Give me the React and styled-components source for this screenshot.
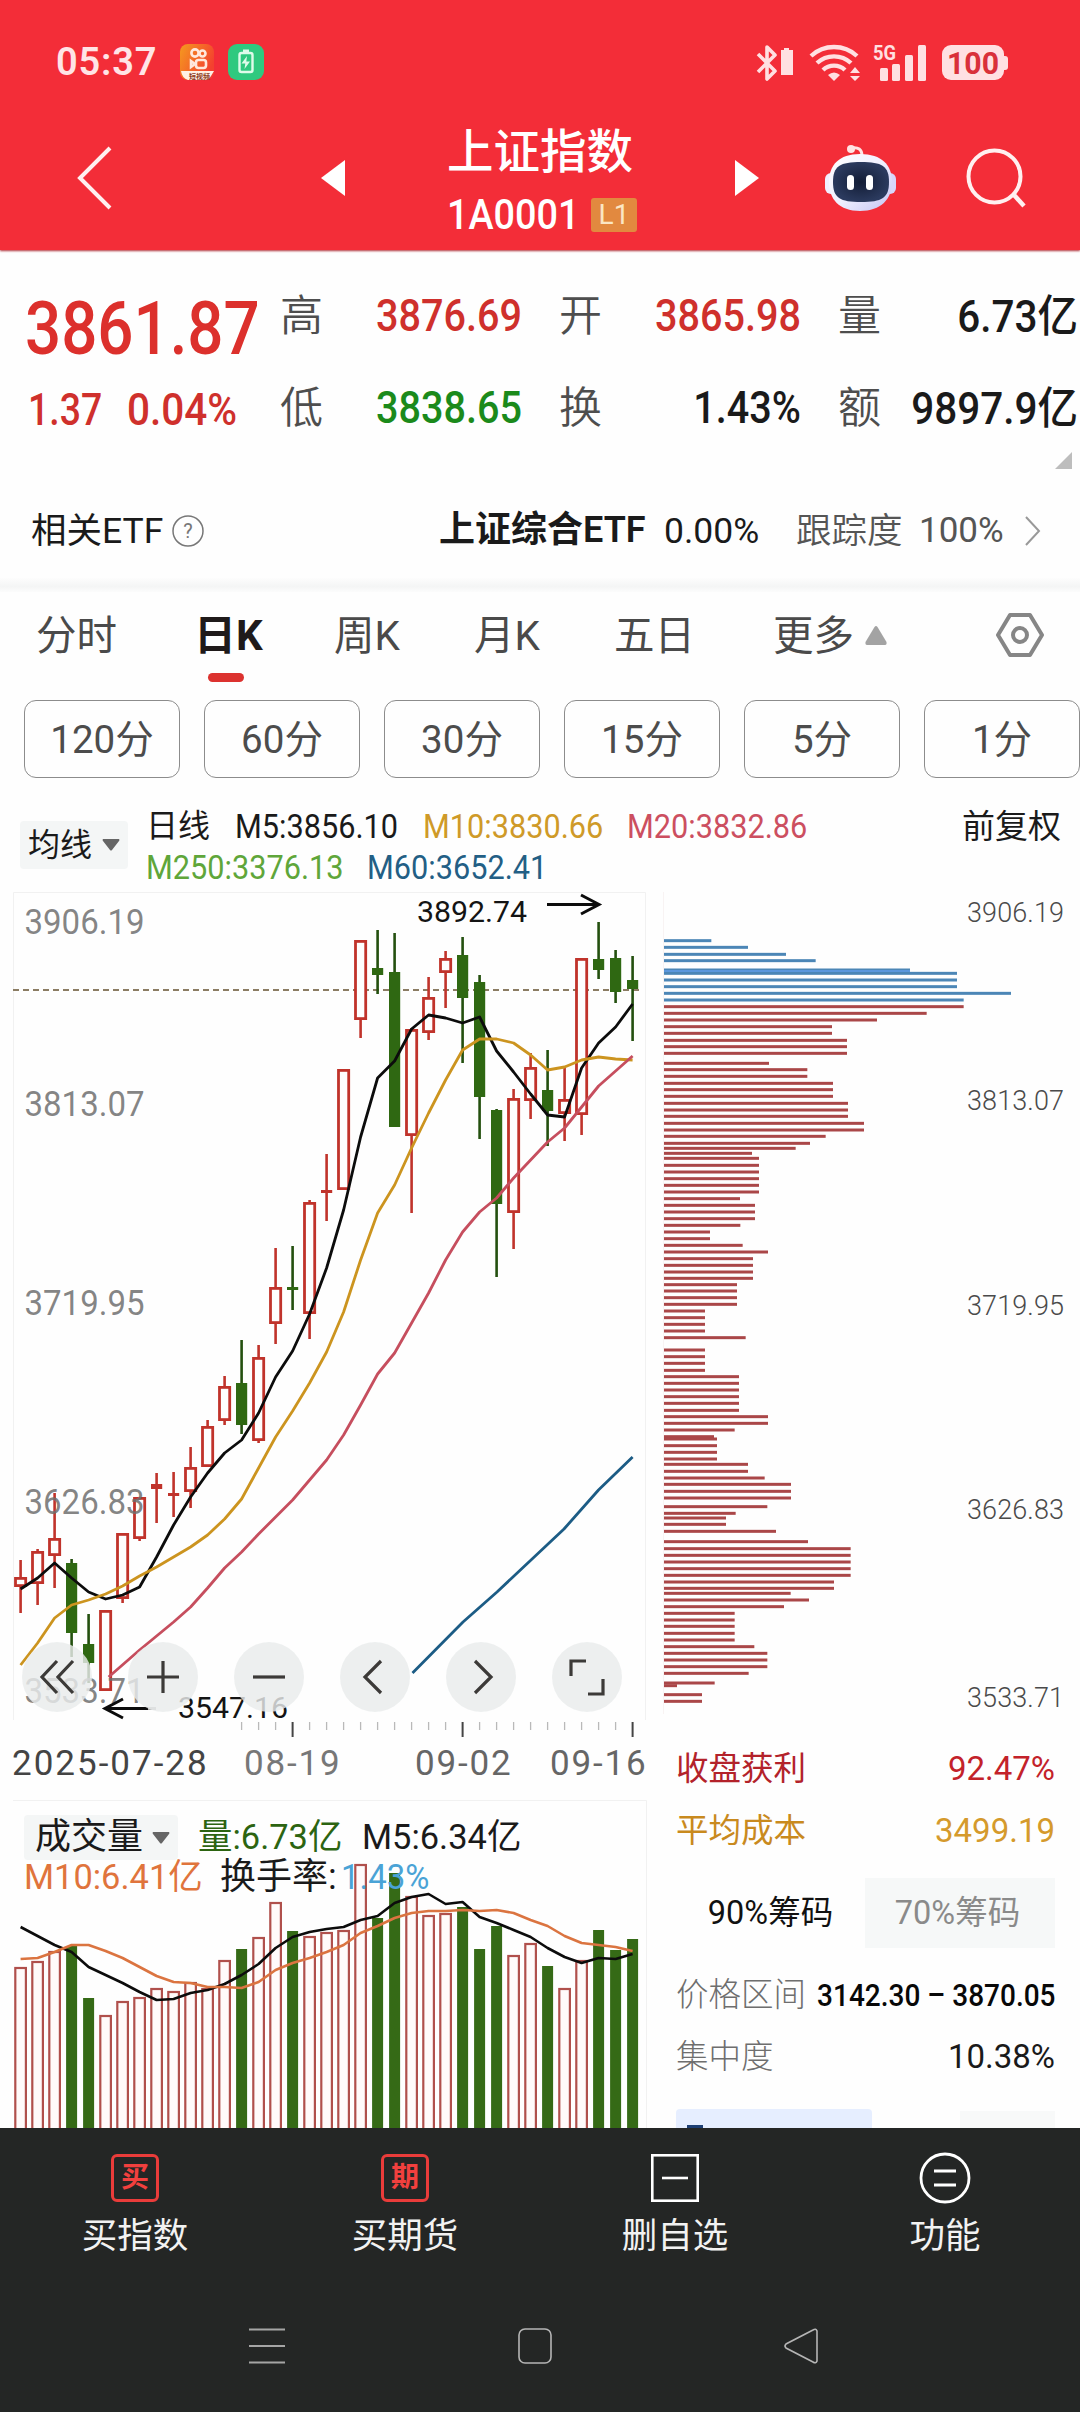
import React from "react";
import styled, { createGlobalStyle } from "styled-components";

const FONT = `Roboto, "Noto Sans CJK SC", sans-serif`;

const GlobalStyle = createGlobalStyle`
  * { box-sizing: border-box; }
  body { margin: 0; background: #fff; font-family: ${FONT}; }
`;

/* ---------- data ---------- */

const STEP = 17;
const xAt = (i) => 20.6 + i * STEP;

// [direction, high, body top, body bottom, low]
const CANDLES = [
  ["r", 1560, 1577, 1587, 1613], ["r", 1549, 1551, 1584, 1605], ["r", 1493, 1538, 1556, 1588],
  ["g", 1559, 1563, 1633, 1657], ["g", 1614, 1644, 1663, 1683], ["r", 1610, 1610, 1691, 1691],
  ["r", 1533, 1533, 1599, 1603], ["r", 1497, 1497, 1539, 1541], ["r", 1473, 1484, 1489, 1523],
  ["r", 1472, 1493, 1496, 1517], ["r", 1447, 1467, 1492, 1508], ["r", 1420, 1426, 1467, 1467],
  ["r", 1376, 1386, 1421, 1425], ["g", 1340, 1383, 1425, 1434], ["r", 1345, 1357, 1441, 1443],
  ["r", 1248, 1287, 1324, 1344], ["g", 1246, 1287, 1290, 1310], ["r", 1200, 1202, 1314, 1339],
  ["r", 1154, 1190, 1193, 1221], ["r", 1069, 1069, 1190, 1190], ["r", 940, 940, 1020, 1038],
  ["g", 930, 968, 975, 994], ["g", 933, 972, 1127, 1127], ["r", 1028, 1029, 1136, 1213],
  ["r", 977, 997, 1033, 1040], ["r", 951, 958, 973, 1008], ["g", 937, 955, 998, 1063],
  ["g", 975, 982, 1097, 1139], ["g", 1109, 1110, 1204, 1277], ["r", 1089, 1098, 1213, 1249],
  ["r", 1053, 1067, 1101, 1119], ["g", 1050, 1090, 1111, 1146], ["r", 1067, 1099, 1114, 1141],
  ["r", 958, 958, 1115, 1135], ["g", 922, 959, 970, 979], ["g", 950, 958, 992, 1003],
  ["g", 956, 980, 989, 1041],
];

const MA5 = [1589, 1578, 1563, 1578, 1592, 1599, 1595, 1587, 1557, 1525, 1497, 1473, 1453, 1440, 1413, 1377, 1351, 1314, 1268, 1210, 1137, 1078, 1061, 1029, 1015, 1018, 1023, 1017, 1051, 1072, 1094, 1115, 1117, 1068, 1043, 1027, 1004];
const MA10 = [1665, 1643, 1618, 1605, 1600, 1594, 1586, 1576, 1567, 1557, 1547, 1535, 1519, 1499, 1468, 1437, 1411, 1383, 1352, 1312, 1260, 1213, 1185, 1148, 1113, 1080, 1050, 1039, 1039, 1043, 1055, 1070, 1067, 1060, 1057, 1059, 1060];
const MA20 = [1650, 1636, 1622, 1607, 1588, 1568, 1552, 1534, 1517, 1500, 1480, 1460, 1435, 1405, 1374, 1353, 1323, 1293, 1260, 1232, 1212, 1198, 1178, 1160, 1142, 1128, 1107, 1086, 1071, 1056];

const VOLUME = [1967, 1961, 1951, 1946, 1998, 2015, 2001, 1997, 1988, 1991, 1982, 1988, 1960, 1949, 1937, 1902, 1931, 1936, 1932, 1930, 1864, 1918, 1873, 1896, 1915, 1913, 1907, 1949, 1926, 1955, 1943, 1966, 1988, 1960, 1930, 1950, 1939];
const VMA5 = [1927, 1936, 1945, 1952, 1967, 1975, 1983, 1992, 2000, 1999, 1993, 1990, 1984, 1975, 1964, 1948, 1937, 1932, 1929, 1927, 1920, 1916, 1903, 1897, 1894, 1904, 1902, 1917, 1923, 1930, 1937, 1948, 1957, 1963, 1958, 1959, 1954];
const VMA10 = [1959, 1958, 1952, 1945, 1945, 1951, 1958, 1967, 1976, 1982, 1983, 1987, 1987, 1988, 1982, 1970, 1963, 1958, 1952, 1945, 1933, 1926, 1918, 1913, 1911, 1911, 1910, 1911, 1910, 1913, 1920, 1926, 1936, 1943, 1945, 1947, 1951];

// [y, length] of each cost-distribution bar, in thirds of a pixel
const CHIPS = [
  [182, 142], [202, 252], [223, 366], [242, 455], [270, 738], [280, 879], [300, 879], [320, 879], [340, 1041], [360, 899],
  [380, 899], [400, 788], [420, 639], [440, 504], [460, 504], [481, 549], [500, 549], [520, 549], [550, 315], [569, 430],
  [589, 430], [610, 507], [629, 507], [649, 507], [670, 552], [690, 552], [709, 552], [730, 600], [750, 600], [769, 485],
  [790, 438], [805, 395], [820, 264], [835, 285], [856, 285], [876, 285], [896, 285], [916, 285], [936, 285], [956, 228],
  [976, 273], [996, 273], [1016, 273], [1036, 229], [1056, 138], [1076, 138], [1096, 236], [1116, 312], [1136, 267], [1156, 267],
  [1176, 267], [1195, 267], [1214, 219], [1233, 219], [1253, 219], [1273, 219], [1293, 123], [1313, 123], [1333, 123], [1353, 123],
  [1373, 245], [1410, 123], [1430, 123], [1450, 123], [1471, 123], [1490, 225], [1510, 225], [1530, 225], [1550, 225], [1570, 225],
  [1591, 225], [1610, 312], [1630, 312], [1650, 212], [1670, 150], [1677, 159], [1697, 159], [1717, 159], [1737, 159], [1753, 252],
  [1774, 252], [1794, 302], [1813, 381], [1834, 381], [1854, 381], [1880, 310], [1900, 215], [1914, 186], [1933, 186], [1954, 336],
  [1985, 432], [2006, 560], [2026, 560], [2046, 560], [2066, 560], [2086, 560], [2106, 510], [2125, 510], [2140, 380], [2160, 435],
  [2180, 360], [2200, 212], [2220, 212], [2239, 212], [2260, 212], [2280, 212], [2300, 271], [2320, 310], [2340, 310], [2360, 310],
  [2380, 254], [2409, 152], [2417, 39], [2444, 114], [2464, 114],
];

const line = (ys, from = 0) => ys.map((y, i) => `${xAt(i + from)},${y}`).join(" ");

/* ---------- shared ---------- */

const Text = styled.span`
  display: block;
  flex: none;
  white-space: nowrap;
  line-height: 1.2;
  font-size: ${(p) => p.$size || 36}px;
  font-weight: ${(p) => p.$weight || 400};
  color: ${(p) => p.$color || "#1a1a1a"};
  width: ${(p) => (p.$w ? `${p.$w}px` : "auto")};
  text-align: ${(p) => p.$align || "left"};
  letter-spacing: ${(p) => p.$ls || 0}px;
  margin-left: ${(p) => p.$ml || 0}px;
  padding-top: ${(p) => p.$pt || 0}px;
  transform: ${(p) => (p.$sx ? `scaleX(${p.$sx})` : "none")};
  transform-origin: ${(p) => p.$align || "left"} center;
`;

const Icon = styled.svg`
  display: block;
  flex: none;
  overflow: visible;
  margin-left: ${(p) => p.$ml || 0}px;
`;

const Screen = styled.div`
  width: 1080px;
  height: 2412px;
  display: flex;
  flex-direction: column;
  overflow: hidden;
  background: #fefefe;
`;

/* ---------- header ---------- */

const Header = styled.header`
  height: 250px;
  flex: none;
  background: #f32d38;
  box-shadow: 0 1px 2px #b03038;
`;

const StatusBar = styled.div`
  height: 125px;
  display: flex;
  align-items: center;
  padding: 0 72px 0 56px;
`;

const StatusRight = styled.div`
  display: flex;
  align-items: center;
  margin-left: auto;
`;

const NavBar = styled.div`
  height: 125px;
  display: flex;
  align-items: center;
  padding: 0 0 20px 77px;
`;

const TitleBlock = styled.div`
  width: 194px;
  margin: 10px 98px 0 98px;
  display: flex;
  flex-direction: column;
  padding-left: 4px;
`;

const CodeRow = styled.div`
  display: flex;
  align-items: center;
  height: 50px;
  margin-top: 10px;
`;

const LevelTag = styled.div`
  width: 48px;
  height: 34px;
  margin-left: 12px;
  border-radius: 3px;
  background: #e2893f;
  color: #fbe6c4;
  font-size: 28px;
  line-height: 34px;
  text-align: center;
`;

/* ---------- quote ---------- */

const Quote = styled.section`
  height: 232px;
  flex: none;
  padding: 21px 2px 0 25px;
`;

const QuoteRow = styled.div`
  height: 92px;
  display: grid;
  grid-template-columns: 255px 45px 197px 37px 45px 197px 37px 45px 195px;
  grid-template-rows: 92px;
  align-items: center;
`;

const Change = styled.div`
  display: flex;
  align-items: center;
  padding-left: 3px;
`;

const Corner = styled.div`
  width: 0;
  height: 0;
  margin: -3px 6px 0 auto;
  border-left: 17px solid transparent;
  border-bottom: 17px solid #bdbdbd;
`;

const EtfRow = styled.section`
  height: 96px;
  flex: none;
  display: flex;
  align-items: center;
  padding: 2px 0 0 31px;
`;

const Divider = styled.div`
  height: 14px;
  flex: none;
  background: linear-gradient(#fdfdfd, #f4f5f5 60%, #fcfcfc);
`;

/* ---------- tabs ---------- */

const Tabs = styled.nav`
  height: 100px;
  flex: none;
  display: flex;
  padding: 0 36px;
`;

const Tab = styled.div`
  width: ${(p) => p.$w}px;
  display: flex;
  align-items: center;
  font-size: ${(p) => (p.$active ? 42 : 40.5)}px;
  line-height: 88px;
  font-weight: ${(p) => (p.$active ? 700 : 400)};
  color: ${(p) => (p.$active ? "#1f1a1a" : "#4a4a4a")};
  height: 88px;
  white-space: nowrap;
`;

const ActiveTab = styled.div`
  width: 140px;
  margin-left: -3px;
  display: flex;
  flex-direction: column;
`;

const Underline = styled.div`
  width: 36px;
  height: 9px;
  margin: -7px 0 0 14px;
  border-radius: 5px;
  background: #dc322f;
`;

const Periods = styled.div`
  height: 100px;
  flex: none;
  display: grid;
  grid-template-columns: repeat(6, 156px);
  grid-template-rows: 78px;
  column-gap: 24px;
  padding: 8px 0 14px 24px;
`;

const Period = styled.div`
  border: 1px solid #8c8c8c;
  border-radius: 12px;
  color: #4c4c4c;
  font-size: 38.500px;
  line-height: 78px;
  text-align: center;
  white-space: nowrap;
`;

/* ---------- legend ---------- */

const Legend = styled.section`
  height: 94px;
  flex: none;
  display: flex;
  padding: 14px 19px 0 20px;
`;

const Picker = styled.div`
  display: flex;
  align-items: center;
  width: ${(p) => p.$w}px;
  height: ${(p) => p.$h || 46}px;
  margin-top: ${(p) => p.$mt || 0}px;
  padding-left: ${(p) => p.$pl || 8}px;
  background: #f4f6f6;
  border-radius: 4px;
`;

const LegendLines = styled.div`
  margin-left: 18px;
  width: 660px;
`;

const LegendLine = styled.div`
  display: flex;
  align-items: center;
  height: 41px;
`;

/* ---------- charts ---------- */

const Body = styled.main`
  height: 1242px;
  flex: none;
  display: grid;
  grid-template-columns: 650px 430px;
`;

const LeftColumn = styled.div`
  display: flex;
  flex-direction: column;
`;

const PricePanel = styled.div`
  position: relative;
  height: 854px;
`;

const Controls = styled.div`
  position: absolute;
  left: 22px;
  top: 756px;
  display: flex;
  gap: 36px;
`;

const RoundButton = styled.div`
  width: 70px;
  height: 70px;
  border-radius: 50%;
  display: flex;
  align-items: center;
  justify-content: center;
  background: rgba(233, 235, 235, 0.82);
`;

const DateAxis = styled.div`
  height: 56px;
  display: flex;
  align-items: flex-start;
  padding: 3px 0 0 12px;
`;

const VolumePanel = styled.div`
  position: relative;
  flex: 1;
`;

const VolumeLegend = styled.div`
  position: absolute;
  left: 24px;
  top: 18px;
`;

const VolumeLine = styled.div`
  display: flex;
  align-items: center;
  height: ${(p) => p.$h}px;
`;

const RightColumn = styled.div`
  display: flex;
  flex-direction: column;
`;

const Stats = styled.div`
  flex: 1;
  padding: 0 25px 0 26px;
  display: flex;
  flex-direction: column;
`;

const StatRow = styled.div`
  height: ${(p) => p.$h || 62}px;
  flex: none;
  display: flex;
  align-items: center;
  justify-content: space-between;
`;

const Segments = styled.div`
  height: 68px;
  flex: none;
  display: grid;
  grid-template-columns: 189px 190px;
  margin: 14px 0 20px;
`;

const Segment = styled.div`
  background: ${(p) => (p.$active ? "transparent" : "#f6f8f8")};
  color: ${(p) => (p.$active ? "#111" : "#8a8a8a")};
  font-size: 32.500px;
  line-height: 70px;
  text-align: center;
  padding-right: ${(p) => (p.$active ? 0 : 5)}px;
`;

const PeekRow = styled.div`
  height: 19px;
  flex: none;
  margin-top: 19px;
  display: flex;
  justify-content: space-between;
  align-items: flex-end;
`;

const PeekBlue = styled.div`
  width: 196px;
  height: 19px;
  display: flex;
  align-items: flex-end;
  padding-left: 11px;
  border-radius: 4px 4px 0 0;
  background: #e6eeff;
`;

const PeekMark = styled.div`
  width: 16px;
  height: 3px;
  background: #1d3f74;
`;

const PeekGrey = styled.div`
  width: 95px;
  height: 17px;
  background: #f8f9f9;
`;

/* ---------- bottom ---------- */

const Toolbar = styled.footer`
  flex: 1;
  background: #242625;
`;

const Actions = styled.div`
  display: grid;
  grid-template-columns: repeat(4, 270px);
  height: 143px;
  padding-top: 24px;
`;

const Action = styled.div`
  display: flex;
  flex-direction: column;
  align-items: center;
  gap: 11px;
`;

const IconSlot = styled.div`
  height: 52px;
  display: flex;
  align-items: center;
`;

const RedGlyph = styled.div`
  width: 48px;
  height: 48px;
  border: 3px solid #ea3c3a;
  border-radius: 6px;
  color: #f2403e;
  font-size: 28px;
  font-weight: 700;
  line-height: 41px;
  text-align: center;
`;

const SystemNav = styled.div`
  display: flex;
  align-items: center;
  height: 150px;
  padding-left: 249px;
`;

/* ---------- pieces ---------- */

const Down = ({ ml, w = 18 }) => (
  <Icon $ml={ml} width={w} height="12" viewBox="0 0 18 12"><path d="M1 0H17Q18 1 17 2L10 11Q9 12 8 11L1 2Q0 1 1 0Z" fill="#666" /></Icon>
);

function StatusIcons() {
  return (
    <StatusRight>
      <Icon width="40" height="38" viewBox="0 0 40 38" fill="none" stroke="#ffe0e2" strokeWidth="3.6">
        <path d="M2 10L19 27L11 35V3L19 11L2 28" strokeLinejoin="round" />
        <path d="M28 4h5v2h4v25H25V6h3z" fill="#ffe0e2" stroke="none" />
      </Icon>
      <Icon $ml="13" width="52" height="38" viewBox="0 0 52 38" fill="none" stroke="#ffe0e2" strokeWidth="4.4">
        <path d="M2 12A34 34 0 0 1 48 12" />
        <path d="M8 19A25 25 0 0 1 42 19" />
        <path d="M14 26A16 16 0 0 1 36 26" />
        <path d="M19 31Q25 26 31 31L25 37Z" fill="#ffe0e2" stroke="none" />
        <path d="M41 29L46 23L51 29ZM41 32L46 37L51 32Z" fill="#ffe0e2" stroke="none" />
      </Icon>
      <Icon $ml="13" width="52" height="38" viewBox="0 0 52 38" fill="#ffe0e2">
        <text x="-1" y="16" fontFamily="Roboto" fontWeight="700" fontSize="21" textLength="23" lengthAdjust="spacingAndGlyphs">5G</text>
        <rect x="6" y="24" width="8" height="13" rx="1.5" />
        <rect x="18" y="20" width="8" height="17" rx="1.5" />
        <rect x="31" y="11" width="8" height="26" rx="1.5" />
        <rect x="44" y="1" width="8" height="36" rx="1.5" />
      </Icon>
      <Icon $ml="16" width="66" height="35" viewBox="0 0 66 35">
        <rect width="62" height="35" rx="9" fill="#ffe0e2" />
        <rect x="58" y="11" width="8" height="14" rx="3" fill="#ffe0e2" />
        <text x="5" y="28.500" fontFamily="Roboto" fontWeight="700" fontSize="32" fill="#d9303a" textLength="52" lengthAdjust="spacingAndGlyphs">100</text>
      </Icon>
    </StatusRight>
  );
}

function AppBadges() {
  return (
    <>
      <Icon $ml="24" width="34" height="37" viewBox="0 0 34 37">
        <defs><linearGradient id="ks" x1="0" y1="0" x2="1" y2="0.5"><stop stopColor="#f59a1f" /><stop offset="1" stopColor="#f4402f" /></linearGradient></defs>
        <rect width="34" height="36" rx="8" fill="url(#ks)" />
        <g fill="none" stroke="#ffe8dc" strokeWidth="2.6">
          <circle cx="15" cy="9" r="3.6" /><circle cx="22.5" cy="9.5" r="3" />
          <rect x="16" y="16" width="10" height="8" rx="2.4" /><path d="M11 17v6l4-3z" />
        </g>
        <path d="M1 27H34L31 32Q29 36 24 36H8Q2 34 1 27Z" fill="#fff0e4" />
        <text x="9" y="34.500" fontFamily="Noto Sans CJK SC" fontWeight="700" fontSize="7" fill="#8b3a1c">短视频</text>
      </Icon>
      <Icon $ml="14" width="36" height="37" viewBox="0 0 36 37">
        <rect width="36" height="36" rx="9" fill="#2fc97f" />
        <rect x="11.5" y="9" width="13" height="19" rx="2" fill="none" stroke="#dffbea" strokeWidth="2.4" />
        <rect x="15" y="5.5" width="6" height="3" fill="#dffbea" />
        <path d="M19 12L13.5 19.5H17.3L16.5 25L22 17.5H18.3Z" fill="#dffbea" />
      </Icon>
    </>
  );
}

const Robot = () => (
  <Icon $ml="65" width="74" height="68" viewBox="0 0 74 68">
    <defs>
      <linearGradient id="shell" x1="0" y1="0" x2="1" y2="1"><stop stopColor="#fff" /><stop offset="0.5" stopColor="#f0f0ff" /><stop offset="1" stopColor="#c3c3f3" /></linearGradient>
      <radialGradient id="face"><stop stopColor="#131d36" /><stop offset="1" stopColor="#2b3a5e" /></radialGradient>
    </defs>
    <circle cx="27" cy="5" r="4" fill="#ffe4e4" />
    <path d="M27 4Q38 2 38 12" fill="none" stroke="#ffe4e4" strokeWidth="3" />
    <rect x="1" y="29" width="12" height="21" rx="6" fill="#f1efff" />
    <rect x="60" y="29" width="12" height="21" rx="6" fill="#d8d6fb" />
    <path d="M36 10C58 10 68 21 68 38S57 67 36 67S5 55 5 38S15 10 36 10Z" fill="url(#shell)" />
    <path d="M37 18C58 18 65 22 65 38S58 58 37 58S9 54 9 38S16 18 37 18Z" fill="url(#face)" />
    <rect x="23" y="31" width="7" height="15" rx="3.5" fill="#fff" />
    <rect x="42" y="31" width="7" height="15" rx="3.5" fill="#fff" />
  </Icon>
);

function Candle({ i, c }) {
  const [dir, hi, top, bot, lo] = c;
  const x = xAt(i);
  const col = dir === "r" ? "#c0332b" : "#2f6812";
  const hollow = dir === "r" && bot - top > 6;
  return (
    <g>
      <path d={`M${x} ${hi}V${top}M${x} ${bot}V${lo}`} stroke={dir === "r" ? col : "#24500f"} strokeWidth="2.6" />
      {hollow ? (
        <rect x={x - 5.1} y={top + 1.4} width="10.2" height={bot - top - 2.8} fill="#fefefe" stroke={col} strokeWidth="2.8" />
      ) : (
        <rect x={x - 5.6} y={top} width="11.2" height={bot - top} fill={col} />
      )}
    </g>
  );
}

const PRICE_LABELS = [["3906.19", 922, 912.5], ["3813.07", 1104, 1100.5], ["3719.95", 1303, 1305], ["3626.83", 1502, 1509], ["3533.71", 1691, 1697]];

function PriceChart() {
  return (
    <svg width="650" height="854" viewBox="0 886 650 854" fontFamily="Roboto">
      <path d="M13.500 1720V892.500H645.500V1720" fill="none" stroke="#f1f1f1" />
      <path d="M13 990H643" stroke="#8b7c63" strokeWidth="1.8" strokeDasharray="6 4" />
      {CANDLES.map((c, i) => <Candle key={i} i={i} c={c} />)}
      <g fill="none" strokeLinejoin="round">
        <polyline points={line(MA5)} stroke="#0c0c0c" strokeWidth="2.8" />
        <polyline points={line(MA10)} stroke="#cc941f" strokeWidth="2.8" />
        <polyline points={`108.600,1677 ${line(MA20, 7)}`} stroke="#c64e5e" strokeWidth="2.8" />
        <polyline points="412.500,1673 463,1622 497,1592 564,1529 598.500,1490 632.600,1457" stroke="#1c5c85" strokeWidth="2.8" />
      </g>
      <g fontSize="35" fill="#6f6f6f" fillOpacity="0.85">
        {PRICE_LABELS.map(([t, y]) => <text key={t} x="24.500" y={y + 12} textLength="120" lengthAdjust="spacingAndGlyphs">{t}</text>)}
      </g>
      <g fontSize="30" fill="#141414">
        <text x="417" y="922" textLength="110" lengthAdjust="spacingAndGlyphs">3892.74</text>
        <text x="178" y="1718" textLength="110" lengthAdjust="spacingAndGlyphs">3547.16</text>
      </g>
      <g fill="none" stroke="#0c0c0c" strokeWidth="3">
        <path d="M547 904.500H598M581 895L599 904.500L581 914" />
        <path d="M148 1708.500H106M123 1699L105 1708.500L123 1718" />
        <path d="M148 1708.500H156" stroke="#aaa" />
      </g>
      {Array.from({ length: 24 }, (_, k) => {
        const i = k + 13;
        const major = i === 16 || i === 26 || i === 36;
        return <path key={i} d={`M${xAt(i)} 1722V${major ? 1737 : 1730}`} stroke={major ? "#444" : "#b9b9b9"} strokeWidth={major ? 2 : 1.3} />;
      })}
    </svg>
  );
}

function VolumeChart() {
  return (
    <svg width="650" height="332" viewBox="0 1796 650 332" display="block">
      <path d="M13 1800.500H646.500V2128" fill="none" stroke="#f1f1f1" />
      {VOLUME.map((y, i) =>
        CANDLES[i][0] === "r" ? (
          <rect key={i} x={xAt(i) - 5.3} y={y + 1} width="10.6" height="300" fill="#fffafa" stroke="#b0504c" strokeWidth="2.2" />
        ) : (
          <rect key={i} x={xAt(i) - 5.5} y={y} width="11" height="300" fill="#356a16" />
        )
      )}
      <g fill="none" strokeLinejoin="round" strokeWidth="2.6">
        <polyline points={line(VMA5)} stroke="#0c0c0c" />
        <polyline points={line(VMA10)} stroke="#db7440" />
      </g>
    </svg>
  );
}

function ChipChart() {
  return (
    <svg width="430" height="854" viewBox="650 886 430 854" fontFamily="Roboto" display="block">
      <path d="M663.500 892V1714" stroke="#f8f3f3" />
      {CHIPS.map(([y, w], i) => (
        <rect key={i} x="664" y={880 + y / 3 - 1.5} width={w / 3} height="3" fill={i < 10 ? "#4c86b6" : "#aa4748"} />
      ))}
      <path d="M664 971H910" stroke="#5b97dc" strokeWidth="2" />
      <g fontSize="27" fontWeight="300" fill="#4a4a4a">
        {PRICE_LABELS.map(([t, , y]) => <text key={t} x="967" y={y + 9.5} textLength="97" lengthAdjust="spacing">{t}</text>)}
      </g>
    </svg>
  );
}

const RED = "#cf302c";

export default function App() {
  return (
    <>
      <GlobalStyle />
      <Screen>
        <Header>
          <StatusBar>
            <Text $size={38} $weight={600} $color="#ffe4e6" $w={100} $ls={0.8}>05:37</Text>
            <AppBadges />
            <StatusIcons />
          </StatusBar>
          <NavBar>
            <Icon width="35" height="64" viewBox="0 0 35 64" fill="none" stroke="#fff0f0" strokeWidth="4"><path d="M33 2L3 32L33 62" /></Icon>
            <Icon $ml="209" width="24" height="36" viewBox="0 0 24 36"><path d="M24 0V36L0 18Z" fill="#fff" /></Icon>
            <TitleBlock>
              <Text $size={46.5} $weight={500} $color="#fff">上证指数</Text>
              <CodeRow>
                <Text $size={42} $weight={500} $color="#fff" $sx={0.9} $w={132}>1A0001</Text>
                <LevelTag>L1</LevelTag>
              </CodeRow>
            </TitleBlock>
            <Icon width="24" height="36" viewBox="0 0 24 36"><path d="M0 0V36L24 18Z" fill="#fff" /></Icon>
            <Robot />
            <Icon $ml="68" width="60" height="60" viewBox="0 0 60 60" fill="none" stroke="#fff0f0" strokeWidth="4"><circle cx="28.500" cy="28.500" r="26" /><path d="M48 47L58 58" strokeWidth="4.500" /></Icon>
          </NavBar>
        </Header>

        <Quote>
          <QuoteRow>
            <Text $size={74} $weight={500} $color="#dc302c" $sx={0.86} $pt={24}>3861.87</Text>
            <Text $size={43} $color="#4e4e4e" $weight={350}>高</Text>
            <Text $size={44.5} $weight={500} $color={RED} $sx={0.89} $align="right">3876.69</Text>
            <i />
            <Text $size={43} $color="#4e4e4e" $weight={350}>开</Text>
            <Text $size={44.5} $weight={500} $color={RED} $sx={0.89} $align="right">3865.98</Text>
            <i />
            <Text $size={43} $color="#4e4e4e" $weight={350}>量</Text>
            <Text $size={44} $weight={500} $sx={0.92} $align="right">6.73亿</Text>
          </QuoteRow>
          <QuoteRow>
            <Change>
              <Text $size={44.5} $weight={500} $color={RED} $sx={0.84} $w={99} $pt={3}>1.37</Text>
              <Text $size={44.5} $weight={500} $color={RED} $sx={0.91} $pt={3}>0.04%</Text>
            </Change>
            <Text $size={43} $color="#4e4e4e" $weight={350}>低</Text>
            <Text $size={44.5} $weight={500} $color="#1b8a1b" $sx={0.89} $align="right">3838.65</Text>
            <i />
            <Text $size={43} $color="#4e4e4e" $weight={350}>换</Text>
            <Text $size={44.5} $weight={500} $sx={0.89} $align="right">1.43%</Text>
            <i />
            <Text $size={43} $color="#4e4e4e" $weight={350}>额</Text>
            <Text $size={44} $weight={500} $sx={0.92} $align="right">9897.9亿</Text>
          </QuoteRow>
          <Corner />
        </Quote>

        <EtfRow>
          <Text $size={35.5} $w={131}>相关ETF</Text>
          <Icon $ml="10" width="32" height="32" viewBox="0 0 32 32">
            <circle cx="16" cy="16" r="15" fill="none" stroke="#777" strokeWidth="1.5" />
            <text x="16" y="23" textAnchor="middle" fontFamily="Roboto" fontSize="20" fill="#777">?</text>
          </Icon>
          <Text $ml={235} $size={36} $weight={600} $w={225}>上证综合ETF</Text>
          <Text $size={35.5} $w={132}>0.00%</Text>
          <Text $size={35.5} $color="#555" $w={123} $weight={350}>跟踪度</Text>
          <Text $size={35} $color="#555" $w={105}>100%</Text>
          <Icon $ml="1" width="16" height="30" viewBox="0 0 16 30" fill="none" stroke="#999" strokeWidth="2"><path d="M1 1L14 15L1 29" /></Icon>
        </EtfRow>
        <Divider />

        <Tabs>
          <Tab $w={161}>分时</Tab>
          <ActiveTab><Tab $active $w={137}>日K</Tab><Underline /></ActiveTab>
          <Tab $w={140}>周K</Tab>
          <Tab $w={140}>月K</Tab>
          <Tab $w={159}>五日</Tab>
          <Tab $w={223}>更多<Icon $ml="11" width="22" height="19" viewBox="0 0 22 19"><path d="M9.500 0Q11 -2 12.500 0L21.500 15Q22 18 20 18H2Q0 18 .5 15Z" fill="#a3a3a3" /></Icon></Tab>
          <Tab $w={48}>
            <Icon width="48" height="44" viewBox="0 0 48 44" fill="none" stroke="#868686" strokeWidth="4"><path d="M14 1H34L46 21L34 41H14L2 21Z" strokeLinejoin="round" /><circle cx="24" cy="21" r="7" /></Icon>
          </Tab>
        </Tabs>
        <Periods>
          {["120分", "60分", "30分", "15分", "5分", "1分"].map((t) => <Period key={t}>{t}</Period>)}
        </Periods>

        <Legend>
          <Picker $w={110} $h={48} $mt={15}>
            <Text $size={32}>均线</Text><Down ml={10} />
          </Picker>
          <LegendLines>
            <LegendLine>
              <Text $size={32} $w={89}>日线</Text>
              <Text $size={33} $w={188} $sx={0.93}>M5:3856.10</Text>
              <Text $size={33} $w={204} $color="#cf9a28" $sx={0.93}>M10:3830.66</Text>
              <Text $size={33} $color="#cc4f60" $sx={0.93}>M20:3832.86</Text>
            </LegendLine>
            <LegendLine>
              <Text $size={33} $w={221} $color="#5fa63a" $sx={0.93}>M250:3376.13</Text>
              <Text $size={33} $color="#235f85" $sx={0.93}>M60:3652.41</Text>
            </LegendLine>
          </LegendLines>
          <LegendLine><Text $size={33} $ml={156}>前复权</Text></LegendLine>
        </Legend>

        <Body>
          <LeftColumn>
            <PricePanel>
              <PriceChart />
              <Controls>
                {["M17 1L2 17L17 33M33 1L18 17L33 33", "M17 1V33M1 17H33", "M1 17H33", "M23 1L7 17L23 33", "M11 1L27 17L11 33", "M1 16V1H16M33 19V34H18"].map((d) => (
                  <RoundButton key={d}>
                    <Icon width="34" height="34" viewBox="0 0 34 34" fill="none" stroke="#3c3a38" strokeWidth="3.2"><path d={d} /></Icon>
                  </RoundButton>
                ))}
              </Controls>
            </PricePanel>
            <DateAxis>
              <Text $size={35} $w={232} $color="#444" $ls={2}>2025-07-28</Text>
              <Text $size={35} $w={171} $color="#777" $ls={1.8}>08-19</Text>
              <Text $size={35} $w={135} $color="#666" $ls={1.8}>09-02</Text>
              <Text $size={35} $color="#666" $ls={1.8}>09-16</Text>
            </DateAxis>
            <VolumePanel>
              <VolumeChart />
              <VolumeLegend>
                <VolumeLine $h={47}>
                  <Picker $w={154} $h={45} $pl={11}><Text $size={36}>成交量</Text><Down ml={9} /></Picker>
                  <Text $ml={20} $size={35.5} $w={164} $color="#2c6411" $sx={0.97}>量:6.73亿</Text>
                  <Text $size={35.5} $sx={0.97}>M5:6.34亿</Text>
                </VolumeLine>
                <VolumeLine $h={33}>
                  <Text $size={35.5} $w={196} $color="#e0743c" $sx={0.97}>M10:6.41亿</Text>
                  <Text $size={36} $w={121}>换手率:</Text>
                  <Text $size={35} $color="#4aa3d6" $sx={0.94}>1.43%</Text>
                </VolumeLine>
              </VolumeLegend>
            </VolumePanel>
          </LeftColumn>

          <RightColumn>
            <ChipChart />
            <Stats>
              <StatRow $h={58}>
                <Text $size={32.5} $color="#b3222a">收盘获利</Text><Text $size={33} $color="#c3222a">92.47%</Text>
              </StatRow>
              <StatRow $h={66}>
                <Text $size={32.5} $color="#c98a1e">平均成本</Text><Text $size={33} $color="#d59a2c">3499.19</Text>
              </StatRow>
              <Segments>
                <Segment $active>90%筹码</Segment>
                <Segment>70%筹码</Segment>
              </Segments>
              <StatRow $h={58}>
                <Text $size={32.5} $weight={300} $color="#6e6e6e" $w={130}>价格区间</Text>
                <Text $size={32} $ml={-40} $weight={500} $sx={0.875} $align="right" $color="#080808">3142.30 – 3870.05</Text>
              </StatRow>
              <StatRow $h={66}>
                <Text $size={32.5} $weight={300} $color="#6e6e6e">集中度</Text><Text $size={33}>10.38%</Text>
              </StatRow>
              <PeekRow><PeekBlue><PeekMark /></PeekBlue><PeekGrey /></PeekRow>
            </Stats>
          </RightColumn>
        </Body>

        <Toolbar>
          <Actions>
            <Action><IconSlot><RedGlyph>买</RedGlyph></IconSlot><Text $size={35.5} $color="#f2f2f2">买指数</Text></Action>
            <Action><IconSlot><RedGlyph>期</RedGlyph></IconSlot><Text $size={35.5} $color="#f2f2f2">买期货</Text></Action>
            <Action>
              <IconSlot><Icon width="48" height="48" viewBox="0 0 48 48" fill="none" stroke="#fff" strokeWidth="2.600"><rect x="1.300" y="1.300" width="45.400" height="45.400" /><path d="M11 24H37" /></Icon></IconSlot>
              <Text $size={35.5} $color="#f2f2f2">删自选</Text>
            </Action>
            <Action>
              <IconSlot><Icon width="52" height="52" viewBox="0 0 52 52" fill="none" stroke="#fff" strokeWidth="2.800"><circle cx="26" cy="26" r="24" /><path d="M15 19H37M15 33H37" /></Icon></IconSlot>
              <Text $size={35.5} $color="#f2f2f2">功能</Text>
            </Action>
          </Actions>
          <SystemNav>
            <Icon width="36" height="36" viewBox="0 0 36 36" stroke="#a5a5a5" strokeWidth="2"><path d="M0 1.500H36M0 18H36M0 34.500H36" /></Icon>
            <Icon $ml="233" width="34" height="36" viewBox="0 0 34 36" fill="none" stroke="#b5b5b5" strokeWidth="1.600"><rect x="1" y="1" width="32" height="34" rx="6" /></Icon>
            <Icon $ml="232" width="34" height="36" viewBox="0 0 34 36" fill="none" stroke="#b5b5b5" strokeWidth="1.600"><path d="M33 3V33Q32 36 29 34L2 20Q0 18 2 16L29 2Q32 0 33 3Z" /></Icon>
          </SystemNav>
        </Toolbar>
      </Screen>
    </>
  );
}
